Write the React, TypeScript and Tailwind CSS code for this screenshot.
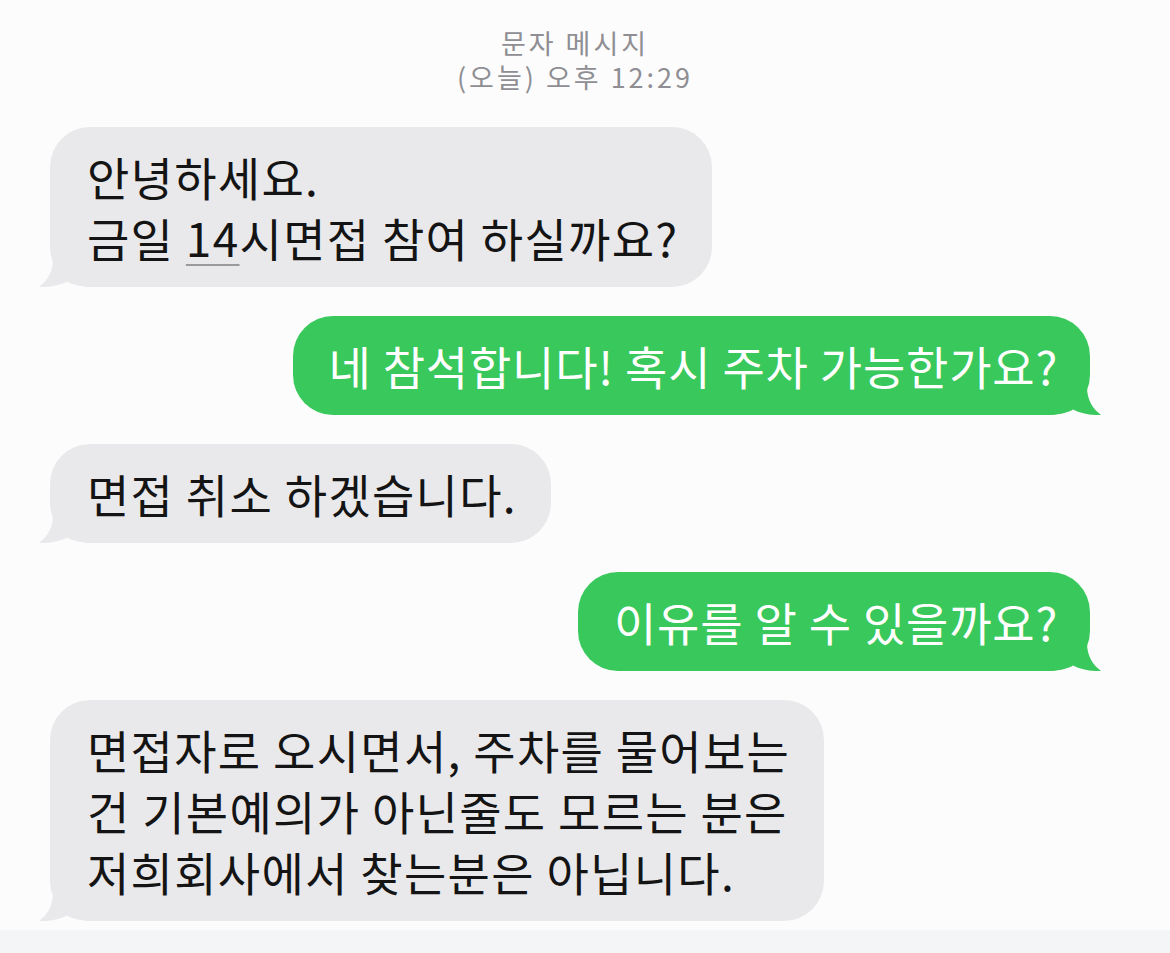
import type { ReactNode } from "react";

type Side = "in" | "out";

function Tail({ side }: { side: Side }) {
  const fill = side === "in" ? "#e9e9eb" : "#39c85b";
  return (
    <svg
      className={
        side === "in"
          ? "absolute bottom-0 -left-[11px] h-[28px] w-[50px]"
          : "absolute bottom-0 -right-[11px] h-[28px] w-[50px] -scale-x-100"
      }
      viewBox="0 0 50 28"
    >
      <path
        d="M14 0 C14 13 8 22 0 28 C10 28.5 20 26.5 28 22.5 C32 25 38 27 50 28 L50 0 Z"
        fill={fill}
      />
    </svg>
  );
}

function Bubble({ side, children }: { side: Side; children: ReactNode }) {
  const isIn = side === "in";
  return (
    <div className={isIn ? "flex justify-start" : "flex justify-end"}>
      <div
        className={
          isIn
            ? "relative w-fit rounded-[40px] bg-[#e9e9eb] pl-[37px] pr-[34px] py-[19px] text-[#141414]"
            : "relative w-fit rounded-[40px] bg-[#39c85b] pl-[36px] pr-[32px] py-[19px] text-white"
        }
      >
        <Tail side={side} />
        <p
          className={
            isIn
              ? "relative text-[46px] leading-[61px] tracking-[1.3px] whitespace-pre"
              : "relative text-[46px] leading-[61px] tracking-[0.8px] whitespace-pre"
          }
        >
          {children}
        </p>
      </div>
    </div>
  );
}

export default function App() {
  return (
    <div className="flex h-[953px] flex-col bg-[#fcfcfc] font-[family-name:'Noto_Sans_CJK_KR','Noto_Sans',sans-serif]">
      <main className="flex-1 pl-[50px] pr-[80px] pt-[26px]">
        {/* header */}
        <div className="pl-[10px] text-center text-[27px] leading-[34px] tracking-[3px] text-[#8e8e93]">
          <div>문자 메시지</div>
          <div>(오늘) 오후 12:29</div>
        </div>

        {/* messages */}
        <div className="mt-[33px] flex flex-col gap-[29px]">
          <Bubble side="in">
            {"안녕하세요.\n금일 "}
            <span className="underline decoration-[#9a9a9a] decoration-2 underline-offset-[7px]">14</span>
            {"시면접 참여 하실까요?"}
          </Bubble>
          <Bubble side="out">네 참석합니다! 혹시 주차 가능한가요?</Bubble>
          <Bubble side="in">면접 취소 하겠습니다.</Bubble>
          <Bubble side="out">이유를 알 수 있을까요?</Bubble>
          <Bubble side="in">
            {"면접자로 오시면서, 주차를 물어보는\n건 기본예의가 아닌줄도 모르는 분은\n저희회사에서 찾는분은 아닙니다."}
          </Bubble>
        </div>
      </main>
      <div className="h-[23px] bg-[#f4f5f7]" />
    </div>
  );
}
